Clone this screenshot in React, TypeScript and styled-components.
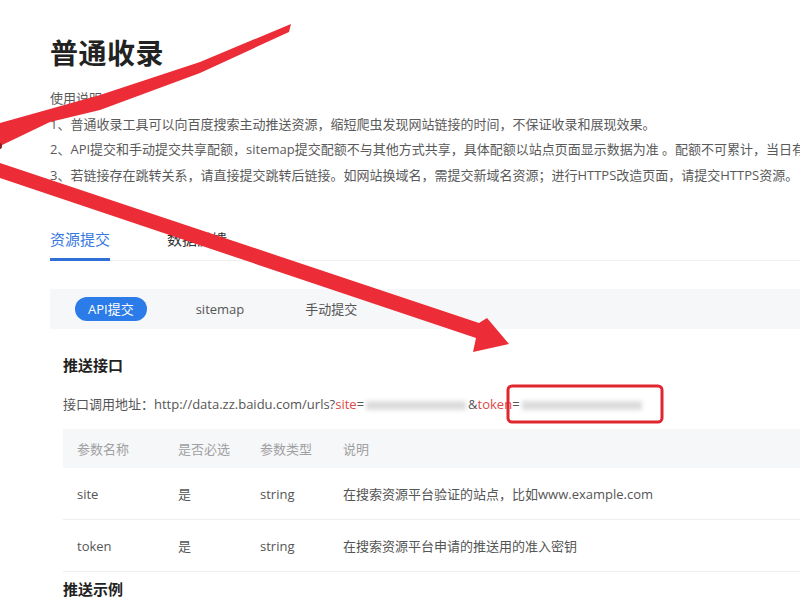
import React from "react";
import styled, { createGlobalStyle } from "styled-components";

const GlobalStyle = createGlobalStyle`
  html, body {
    margin: 0;
    padding: 0;
    background: #ffffff;
  }
  body {
    font-family: "Open Sans", "Noto Sans CJK SC", sans-serif;
    color: #555;
    overflow: hidden;
    width: 800px;
    height: 600px;
  }
`;

const Page = styled.div`
  position: relative;
  width: 800px;
  height: 600px;
  overflow: hidden;
  padding: 32px 0 0 50px;
  box-sizing: border-box;
`;

const Title = styled.h1`
  margin: 0;
  font-size: 28px;
  line-height: 40px;
  font-weight: 700;
  color: #222;
  font-family: "Noto Sans CJK SC", sans-serif;
  letter-spacing: 0.5px;
`;

const Intro = styled.div`
  margin-top: 14px;
  font-size: 13px;
  line-height: 25.5px;
  color: #5a5a5a;
  white-space: nowrap;
`;

const IntroLine = styled.div``;

const Tabs = styled.div`
  margin-top: 40px;
  display: flex;
  gap: 57px;
  border-bottom: 1px solid #f0f0f0;
  width: 900px;
`;

const Tab = styled.div<{ $active?: boolean }>`
  font-size: 15px;
  line-height: 22px;
  padding-bottom: 8px;
  margin-bottom: -1px;
  color: ${(p) => (p.$active ? "#3578e0" : "#333")};
  border-bottom: 3px solid ${(p) => (p.$active ? "#2f6fd8" : "transparent")};
`;

const SubBar = styled.div`
  margin-top: 28px;
  height: 40px;
  background: #f6f7f9;
  display: flex;
  align-items: center;
  padding-left: 25px;
  gap: 37px;
  width: 900px;
`;

const SubTab = styled.div<{ $active?: boolean }>`
  height: 24px;
  line-height: 24px;
  padding: 0 ${(p) => (p.$active ? 13 : 12)}px;
  border-radius: 12px;
  font-size: 13px;
  background: ${(p) => (p.$active ? "#2b7be8" : "transparent")};
  color: ${(p) => (p.$active ? "#fff" : "#555")};
`;

const Section = styled.div`
  padding-left: 13px;
  width: 900px;
`;

const SectionTitle = styled.div<{ $top: number }>`
  margin-top: ${(p) => p.$top}px;
  font-size: 15px;
  line-height: 22px;
  font-weight: 700;
  color: #222;
  font-family: "Noto Sans CJK SC", sans-serif;
`;

const UrlLine = styled.div`
  margin-top: 17px;
  font-size: 13px;
  line-height: 22px;
  color: #555;
  white-space: nowrap;
`;

const Red = styled.span`
  color: #e04848;
`;

const Blur = styled.span<{ $w: number }>`
  display: inline-block;
  width: ${(p) => p.$w}px;
  height: 9px;
  vertical-align: middle;
  background: #dcdcdc;
  filter: blur(2px);
  margin: 0 2px;
`;

const Table = styled.div`
  margin-top: 14px;
`;

const Row = styled.div<{ $head?: boolean }>`
  display: grid;
  grid-template-columns: 101px 82px 83px 1fr;
  align-items: center;
  height: ${(p) => (p.$head ? 39 : 51)}px;
  background: ${(p) => (p.$head ? "#f6f7f9" : "transparent")};
  border-bottom: ${(p) => (p.$head ? "none" : "1px solid #eeeeee")};
  color: ${(p) => (p.$head ? "#a0a0a0" : "#555")};
  font-size: 13px;
`;

const Cell = styled.div`
  padding-left: 14px;
  white-space: nowrap;
`;

const Overlay = styled.svg`
  position: absolute;
  left: 0;
  top: 0;
  width: 800px;
  height: 600px;
  pointer-events: none;
`;

export default function App() {
  return (
    <>
      <GlobalStyle />
      <Page>
        <Title>普通收录</Title>
        <Intro>
          <IntroLine>使用说明</IntroLine>
          <IntroLine>1、普通收录工具可以向百度搜索主动推送资源，缩短爬虫发现网站链接的时间，不保证收录和展现效果。</IntroLine>
          <IntroLine>2、API提交和手动提交共享配额，sitemap提交配额不与其他方式共享，具体配额以站点页面显示数据为准 。配额不可累计，当日有效</IntroLine>
          <IntroLine>3、若链接存在跳转关系，请直接提交跳转后链接。如网站换域名，需提交新域名资源；进行HTTPS改造页面，请提交HTTPS资源。</IntroLine>
        </Intro>
        <Tabs>
          <Tab $active>资源提交</Tab>
          <Tab>数据反馈</Tab>
        </Tabs>
        <SubBar>
          <SubTab $active>API提交</SubTab>
          <SubTab>sitemap</SubTab>
          <SubTab>手动提交</SubTab>
        </SubBar>
        <Section>
          <SectionTitle $top={25}>推送接口</SectionTitle>
          <UrlLine>
            接口调用地址：http://data.zz.baidu.com/urls?<Red>site</Red>=
            <Blur $w={100} />
            &amp;<Red>token</Red>=<Blur $w={120} />
          </UrlLine>
          <Table>
            <Row $head>
              <Cell>参数名称</Cell>
              <Cell>是否必选</Cell>
              <Cell>参数类型</Cell>
              <Cell>说明</Cell>
            </Row>
            <Row>
              <Cell>site</Cell>
              <Cell>是</Cell>
              <Cell>string</Cell>
              <Cell>在搜索资源平台验证的站点，比如www.example.com</Cell>
            </Row>
            <Row>
              <Cell>token</Cell>
              <Cell>是</Cell>
              <Cell>string</Cell>
              <Cell>在搜索资源平台申请的推送用的准入密钥</Cell>
            </Row>
          </Table>
          <SectionTitle $top={6}>推送示例</SectionTitle>
        </Section>
        <Overlay viewBox="0 0 800 600">
          <polygon
            points="291,24 200,62 100,95 0,123 0,146 50,122 100,110 200,73 289,32"
            fill="#ec2c36"
          />
          <ellipse cx="0" cy="146" rx="2" ry="3" fill="#8a1c20" />
          <polygon
            points="0,163 479,323 487,318 509,344 473,352 476,338 0,178"
            fill="#ec2c36"
          />
          <rect
            x="508"
            y="386"
            width="154"
            height="36"
            rx="4"
            ry="4"
            fill="none"
            stroke="#e0262f"
            strokeWidth="3"
          />
        </Overlay>
      </Page>
    </>
  );
}
